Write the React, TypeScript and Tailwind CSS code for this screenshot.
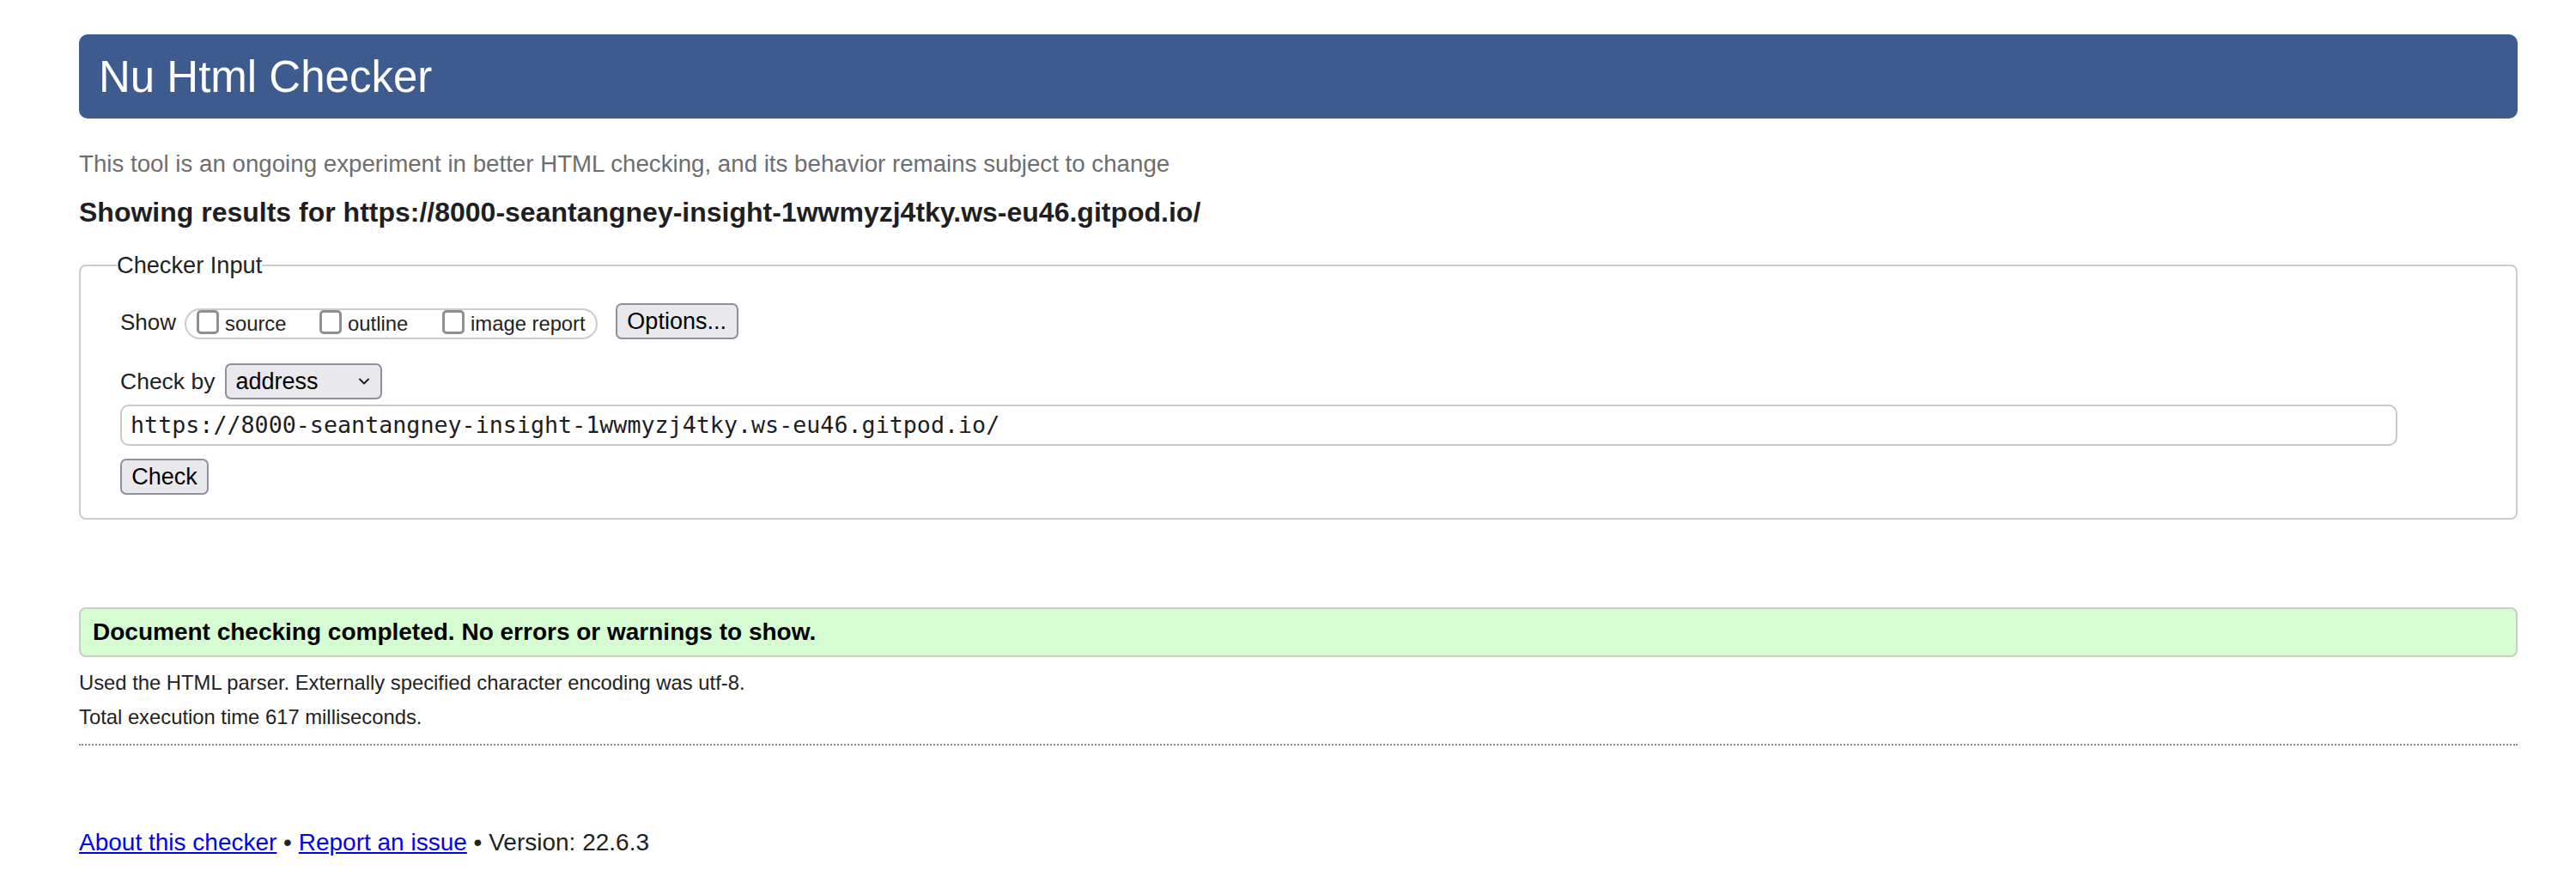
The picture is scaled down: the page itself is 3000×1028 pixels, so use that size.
import React from "react";

const sans = "font-['Liberation_Sans',Arial,sans-serif]";

function Checkbox({ label, wide }: { label: string; wide?: boolean }) {
  return (
    <label className={`flex items-center ${wide ? "w-[143px]" : ""}`}>
      <span className="w-[26px] h-[28px] border-[3px] border-[#8e8e93] rounded-[5px] bg-white mt-[-4px]" />
      <span className="ml-[7px] text-[23.8px] leading-[30px] text-[#222]">{label}</span>
    </label>
  );
}

export default function App() {
  return (
    <div className={`${sans} bg-white min-h-[1028px] w-[3000px] pl-[92px] text-[#222]`}>
      <div className="w-[2840px]">
        {/* header */}
        <div className="mt-[40px] h-[98px] rounded-[10px] bg-[#3d5b8f] flex items-center pl-[23px]">
          <h1 className="text-[51px] leading-none text-white font-normal">Nu Html Checker</h1>
        </div>

        <p className="mt-[38px] text-[27.7px] leading-[30px] text-[#6e6e6e]">
          This tool is an ongoing experiment in better HTML checking, and its behavior remains subject to change
        </p>

        <h2 className="mt-[22px] text-[32px] leading-[38px] font-bold text-[#1f1f23]">
          Showing results for https://8000-seantangney-insight-1wwmyzj4tky.ws-eu46.gitpod.io/
        </h2>

        {/* checker input */}
        <fieldset className="mt-[28px] border-2 border-[#cccccc] rounded-[8px] pl-[46px] pt-[29px] pb-[27px]">
          <legend className="-ml-[4px] text-[27.2px] leading-[30px] text-[#222]">Checker Input</legend>

          <div className="flex items-end h-[42px]">
            <span className="text-[26px] leading-[30px] mb-[5px]">Show</span>
            <div className="ml-[10px] h-[36px] rounded-full border-2 border-[#cccccc] flex items-center pl-[12px] pr-[12px]">
              <Checkbox label="source" wide />
              <Checkbox label="outline" wide />
              <Checkbox label="image report" />
            </div>
            <button className="ml-[21px] w-[143px] h-[42px] border-2 border-[#8f8f9d] rounded-[7px] bg-[#e9e9ed] text-[27px] leading-none text-black">
              Options...
            </button>
          </div>

          <div className="mt-[28px] flex items-center h-[42px]">
            <span className="text-[26.5px] leading-[30px]">Check by</span>
            <div className="ml-[12px] w-[183px] h-[42px] border-2 border-[#8f8f9d] rounded-[7px] bg-[#e9e9ed] flex items-center pl-[10px] pr-[12px] justify-between">
              <span className="text-[27px] leading-none text-black">address</span>
              <svg width="14" height="10" viewBox="0 0 14 10" fill="none">
                <path d="M2 2.5 L7 7.5 L12 2.5" stroke="#222" strokeWidth="2" strokeLinecap="round" strokeLinejoin="round" />
              </svg>
            </div>
          </div>

          <div className="mt-[6px] w-[2652px] h-[48px] border-2 border-[#c8c8c8] rounded-[10px] flex items-center pl-[10px]">
            <span className="font-['DejaVu_Sans_Mono',monospace] text-[26.7px] leading-none text-[#1d1d1f]">
              https://8000-seantangney-insight-1wwmyzj4tky.ws-eu46.gitpod.io/
            </span>
          </div>

          <button className="mt-[15px] block w-[103px] h-[42px] border-2 border-[#8f8f9d] rounded-[7px] bg-[#e9e9ed] text-[27px] leading-none text-black">
            Check
          </button>
        </fieldset>

        {/* result */}
        <div className="mt-[102px] h-[58px] border-2 border-[#cccccc] rounded-[8px] bg-[#d6fcd1] flex items-center pl-[14px]">
          <span className="text-[28px] leading-none font-bold text-black">
            Document checking completed. No errors or warnings to show.
          </span>
        </div>

        <p className="mt-[16px] text-[23.8px] leading-[28px]">
          Used the HTML parser. Externally specified character encoding was utf-8.
        </p>
        <p className="mt-[12px] text-[23.8px] leading-[28px]">Total execution time 617 milliseconds.</p>

        <div className="mt-[17px] border-t-2 border-dotted border-[#8a8a8a]" />

        <p className="mt-[97px] text-[28px] leading-[32px]">
          <a href="#" className="text-[#0000ee] underline">About this checker</a>
          {" • "}
          <a href="#" className="text-[#0000ee] underline">Report an issue</a>
          {" • Version: 22.6.3"}
        </p>
      </div>
    </div>
  );
}
